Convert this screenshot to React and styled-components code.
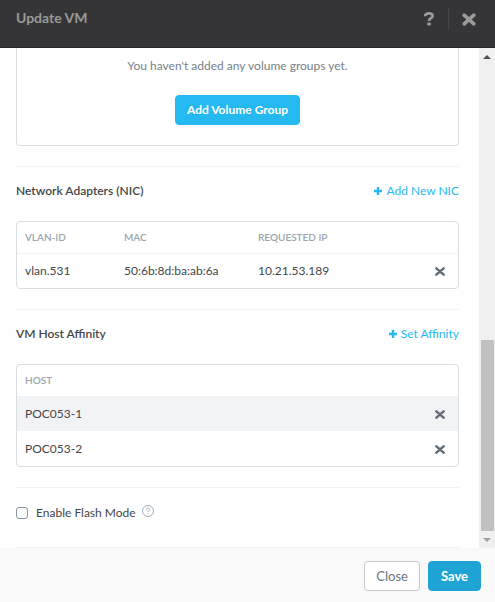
import React from 'react';
import styled, { createGlobalStyle, css } from 'styled-components';

const GlobalStyle = createGlobalStyle`
  *, *::before, *::after { box-sizing: border-box; }
  body { margin: 0; background: #fff; }
  body, button, input, table {
    font-family: Lato, "Open Sans", sans-serif;
    font-size: 12px;
    line-height: 18px;
  }
`;

const Dialog = styled.div`
  display: flex;
  flex-direction: column;
  height: 100vh;
  color: #444648;
`;

const Header = styled.header`
  display: flex;
  flex: none;
  align-items: flex-start;
  justify-content: space-between;
  height: 48px;
  padding: 8px 19px 0 16px;
  background: #353537;
  border-bottom: 1px solid #29262b;
`;

const Title = styled.h1`
  margin: 0;
  color: #999;
  font-size: 14px;
  line-height: 20px;
  font-weight: 700;
`;

const HeaderActions = styled.div`
  display: flex;
  height: 22px;
`;

const HeaderButton = styled.button`
  display: flex;
  align-items: center;
  padding: 0;
  border: 0;
  background: none;
  color: #999;
  cursor: pointer;

  & + & {
    margin-left: 14px;
    padding-left: 13px;
    border-left: 1px solid #464648;
  }
`;

const Viewport = styled.div`
  display: flex;
  flex: 1;
  min-height: 0;
`;

const Content = styled.main`
  flex: 1;
  min-width: 0;
  padding: 0 20px 0 16px;
  overflow: hidden;
`;

const EmptyPanel = styled.div`
  display: flex;
  flex-direction: column;
  align-items: center;
  gap: 20px;
  padding: 9px 16px 20px;
  margin-bottom: 20px;
  border: 1px solid #d9dee3;
  border-top: 0;
  border-radius: 0 0 4px 4px;
  color: #77818a;
`;

const EmptyText = styled.p`
  margin: 0;
`;

const buttonLook = {
  primary: css`
    background: #25b9f1;
    border-color: #25b9f1;
    color: #fff;
    font-weight: 700;
  `,
  save: css`
    padding: 0 12px;
    background: #20a4d6;
    border-color: #20a4d6;
    color: #fff;
    font-size: 13px;
    font-weight: 700;
  `,
  outline: css`
    background: #fff;
    border-color: #c3c8cd;
    color: #6b747c;
    font-size: 13px;
  `,
};

const Button = styled.button`
  height: 30px;
  padding: 0 11px;
  border: 1px solid;
  border-radius: 4px;
  cursor: pointer;
  ${({ $look }) => buttonLook[$look]}
`;

const Section = styled.section`
  padding-bottom: 20px;
  border-top: 1px solid #f1f2f4;
`;

const SectionHeader = styled.div`
  display: flex;
  justify-content: space-between;
  padding: 15px 0 21px;
`;

const SectionTitle = styled.h2`
  margin: 0;
  font-size: 12px;
  line-height: 18px;
  font-weight: 600;
`;

const LinkAction = styled.a`
  display: flex;
  align-items: center;
  gap: 4px;
  color: #25b9f1;
  text-decoration: none;
`;

const TableFrame = styled.div`
  overflow: hidden;
  border: 1px solid #d9dee3;
  border-radius: 4px;
`;

const Table = styled.table`
  width: 100%;
  border-collapse: separate;
  border-spacing: 0;
  table-layout: fixed;
`;

const Row = styled.tr`
  background: ${({ $shaded }) => ($shaded ? '#f2f3f5' : 'transparent')};
`;

const HeadCell = styled.th`
  width: ${({ $width }) => $width || 'auto'};
  height: 31px;
  padding: 0 0 2px 8px;
  color: #9aa5af;
  font-size: 10px;
  line-height: 18px;
  font-weight: 600;
  text-align: left;
`;

const Cell = styled.td`
  height: 35px;
  padding: 0 0 0 8px;
  border-top: 1px solid ${({ $ruled }) => ($ruled ? '#f1f2f4' : 'transparent')};
`;

const RemoveButton = styled.button`
  display: flex;
  padding: 0 2px;
  border: 0;
  background: none;
  color: #626c75;
  cursor: pointer;
`;

const FlashSection = styled.section`
  display: flex;
  align-items: center;
  gap: 6px;
  padding: 16px 0 25px;
  border-top: 1px solid #f1f2f4;
  border-bottom: 1px solid #f1f2f4;
`;

const CheckLabel = styled.label`
  display: flex;
  align-items: center;
  gap: 8px;
`;

const Checkbox = styled.input`
  appearance: none;
  width: 12px;
  height: 12px;
  margin: 0;
  border: 1px solid #8797a7;
  border-radius: 3px;
  background: #fff;

  &:checked { background: #25b9f1; }
`;

const HelpButton = styled.button`
  display: flex;
  padding: 0 0 4px;
  border: 0;
  background: none;
  color: #a3adb7;
  cursor: pointer;
`;

const ScrollTrack = styled.div`
  display: flex;
  flex: none;
  flex-direction: column;
  width: 16px;
  background: #f0f0f0;
`;

const ScrollArrow = styled.button`
  display: flex;
  flex: none;
  align-items: center;
  justify-content: center;
  height: 17px;
  padding: 0;
  border: 0;
  background: none;
  color: ${({ $muted }) => ($muted ? '#a0a0a0' : '#505050')};
`;

const ScrollLane = styled.div`
  display: flex;
  flex: 1;
  flex-direction: column;
  justify-content: flex-end;
  padding: 0 1px 0 2px;
`;

const ScrollThumb = styled.div`
  height: 41%;
  background: #c1c1c1;
`;

const Footer = styled.footer`
  display: flex;
  flex: none;
  justify-content: flex-end;
  gap: 8px;
  padding: 13px 14px 11px;
  background: #f9f9f9;
`;

const CrossIcon = () => (
  <svg width="14" height="13" viewBox="0 0 14 13" aria-hidden="true">
    <path d="M2.2 2.2L11.8 10.8M11.8 2.2L2.2 10.8" stroke="currentColor" strokeWidth="3.6" strokeLinecap="round" />
  </svg>
);

const SmallCrossIcon = () => (
  <svg width="10" height="9" viewBox="0 0 10 9" aria-hidden="true">
    <path d="M1.4 1.4L8.6 7.6M8.6 1.4L1.4 7.6" stroke="currentColor" strokeWidth="2.5" strokeLinecap="round" />
  </svg>
);

const QuestionIcon = () => (
  <svg width="10" height="14" viewBox="0 0 10 14" aria-hidden="true">
    <path d="M1.2 4.2C1.2 2.2 2.8 1.4 4.9 1.4C7.1 1.4 8.6 2.2 8.6 4C8.6 6.3 5 6.1 5 9" fill="none" stroke="currentColor" strokeWidth="2.8" />
    <path d="M3.2 10.6h3.6v2.8H3.2z" fill="currentColor" />
  </svg>
);

const PlusIcon = () => (
  <svg width="8" height="8" viewBox="0 0 8 8" aria-hidden="true">
    <path d="M4 0v8M0 4h8" stroke="currentColor" strokeWidth="2.4" />
  </svg>
);

const HelpIcon = () => (
  <svg width="12" height="12" viewBox="0 0 12 12" fill="none" stroke="currentColor" aria-hidden="true">
    <circle cx="6" cy="6" r="5.5" />
    <path d="M4.3 4.7C4.3 3.6 5 3.1 6 3.1S7.7 3.7 7.7 4.6C7.7 5.7 6 5.7 6 7.1M6 8.1v1.1" />
  </svg>
);

const ArrowIcon = ({ down }) => (
  <svg width="8" height="4" viewBox="0 0 8 4" aria-hidden="true">
    <path d={down ? 'M0 0h8L4 4z' : 'M0 4h8L4 0z'} fill="currentColor" />
  </svg>
);

const nics = [{ vlan: 'vlan.531', mac: '50:6b:8d:ba:ab:6a', ip: '10.21.53.189' }];
const hosts = ['POC053-1', 'POC053-2'];

const Remove = ({ name }) => (
  <RemoveButton type="button" aria-label={`Remove ${name}`}>
    <SmallCrossIcon />
  </RemoveButton>
);

export default function App() {
  return (
    <>
      <GlobalStyle />
      <Dialog role="dialog" aria-labelledby="dialog-title">
        <Header>
          <Title id="dialog-title">Update VM</Title>
          <HeaderActions>
            <HeaderButton type="button" aria-label="Help"><QuestionIcon /></HeaderButton>
            <HeaderButton type="button" aria-label="Close dialog"><CrossIcon /></HeaderButton>
          </HeaderActions>
        </Header>

        <Viewport>
          <Content>
            <EmptyPanel>
              <EmptyText>You haven't added any volume groups yet.</EmptyText>
              <Button type="button" $look="primary">Add Volume Group</Button>
            </EmptyPanel>

            <Section>
              <SectionHeader>
                <SectionTitle>Network Adapters (NIC)</SectionTitle>
                <LinkAction href="#add-nic"><PlusIcon />Add New NIC</LinkAction>
              </SectionHeader>
              <TableFrame>
                <Table>
                  <thead>
                    <Row>
                      <HeadCell $width="99px">VLAN-ID</HeadCell>
                      <HeadCell $width="134px">MAC</HeadCell>
                      <HeadCell>REQUESTED IP</HeadCell>
                      <HeadCell $width="33px" aria-label="Actions" />
                    </Row>
                  </thead>
                  <tbody>
                    {nics.map((nic) => (
                      <Row key={nic.mac}>
                        <Cell $ruled>{nic.vlan}</Cell>
                        <Cell $ruled>{nic.mac}</Cell>
                        <Cell $ruled>{nic.ip}</Cell>
                        <Cell $ruled><Remove name={nic.vlan} /></Cell>
                      </Row>
                    ))}
                  </tbody>
                </Table>
              </TableFrame>
            </Section>

            <Section>
              <SectionHeader>
                <SectionTitle>VM Host Affinity</SectionTitle>
                <LinkAction href="#set-affinity"><PlusIcon />Set Affinity</LinkAction>
              </SectionHeader>
              <TableFrame>
                <Table>
                  <thead>
                    <Row>
                      <HeadCell>HOST</HeadCell>
                      <HeadCell $width="33px" aria-label="Actions" />
                    </Row>
                  </thead>
                  <tbody>
                    {hosts.map((host, index) => (
                      <Row key={host} $shaded={index % 2 === 0}>
                        <Cell>{host}</Cell>
                        <Cell><Remove name={host} /></Cell>
                      </Row>
                    ))}
                  </tbody>
                </Table>
              </TableFrame>
            </Section>

            <FlashSection>
              <CheckLabel htmlFor="flash-mode">
                <Checkbox id="flash-mode" type="checkbox" />
                Enable Flash Mode
              </CheckLabel>
              <HelpButton type="button" aria-label="About flash mode"><HelpIcon /></HelpButton>
            </FlashSection>
          </Content>

          <ScrollTrack>
            <ScrollArrow type="button" aria-label="Scroll up"><ArrowIcon /></ScrollArrow>
            <ScrollLane><ScrollThumb /></ScrollLane>
            <ScrollArrow type="button" aria-label="Scroll down" $muted><ArrowIcon down /></ScrollArrow>
          </ScrollTrack>
        </Viewport>

        <Footer>
          <Button type="button" $look="outline">Close</Button>
          <Button type="button" $look="save">Save</Button>
        </Footer>
      </Dialog>
    </>
  );
}
